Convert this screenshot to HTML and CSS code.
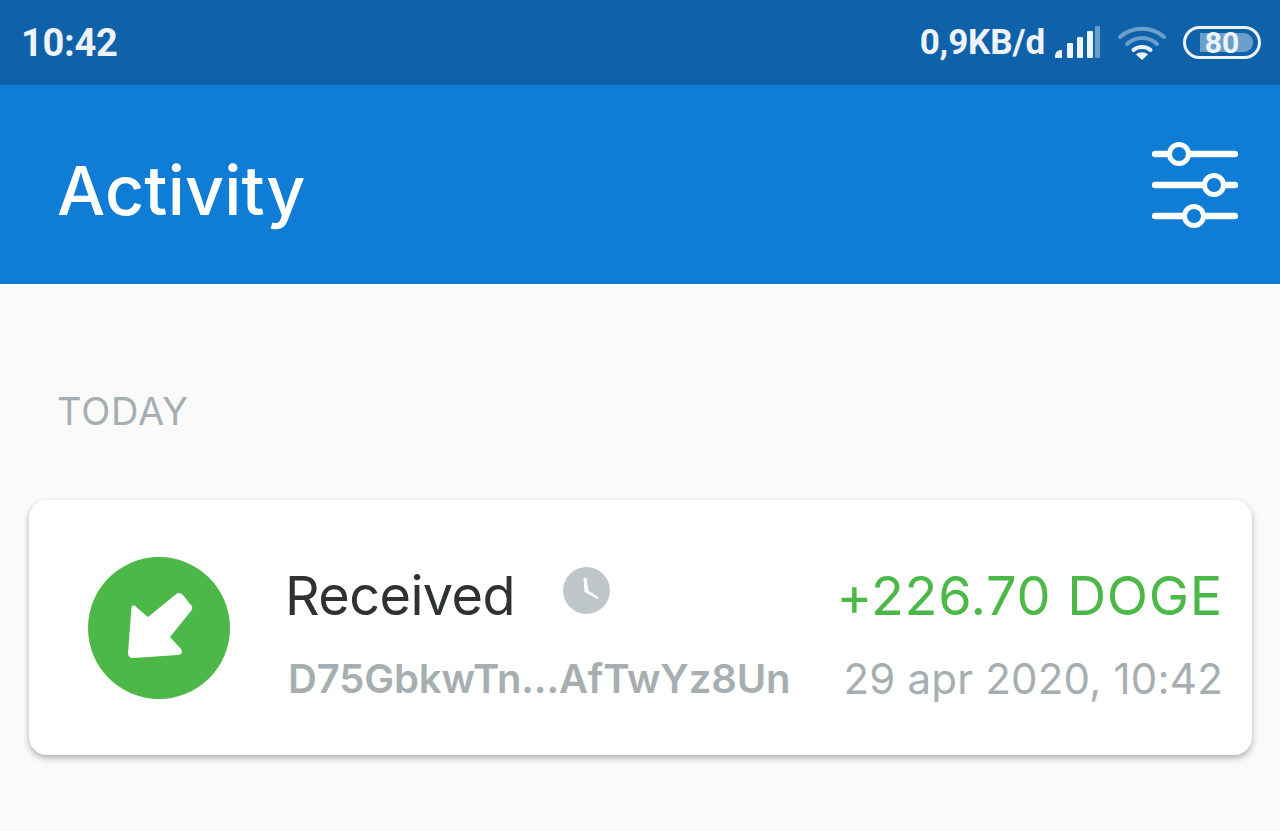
FILE: index.html
```html
<!DOCTYPE html>
<html lang="en">
<head>
  <meta charset="UTF-8">
  <title>Activity</title>
  <link rel="stylesheet" href="styles.css">
</head>
<body>

  <!-- Phone status bar -->
  <div class="status-bar">
    <span class="clock">10:42</span>
    <div class="status-right">
      <span class="net-speed">0,9KB/d</span>
      <svg class="signal" width="46" height="34" viewBox="0 0 46 34">
        <path d="M1 32v-2a6 6 0 0 1 6-6h1v8z" fill="#eef3f8"/>
        <rect x="13" y="17" width="6" height="15" rx="1" fill="#eef3f8"/>
        <rect x="23" y="11" width="6" height="21" rx="1" fill="#eef3f8"/>
        <rect x="33" y="5" width="6" height="27" rx="1" fill="#eef3f8"/>
        <rect x="41" y="0" width="5" height="32" rx="1" fill="#6a9fcc"/>
      </svg>
      <svg class="wifi" width="48" height="36" viewBox="0 0 48 36">
        <path d="M2 12C14 1 34 1 46 12" fill="none" stroke="#6a9fcc" stroke-width="4" stroke-linecap="round"/>
        <path d="M9 19C18 11 30 11 39 19" fill="none" stroke="#6a9fcc" stroke-width="4" stroke-linecap="round"/>
        <path d="M15.500 25C20 21 28 21 32.500 25" fill="none" stroke="#eef3f8" stroke-width="4" stroke-linecap="round"/>
        <path d="M24 35l-6-5.500c3-3 9-3 12 0z" fill="#eef3f8"/>
      </svg>
      <div class="battery">
        <div class="battery-fill"></div>
        <span class="battery-text">80</span>
      </div>
    </div>
  </div>

  <!-- App header -->
  <header class="app-bar">
    <h1 class="app-title">Activity</h1>
    <svg class="filter-icon" width="86" height="90" viewBox="0 0 86 90">
      <g stroke="#fff" stroke-width="6.500" stroke-linecap="round" fill="none">
        <path d="M3 14h80"/>
        <path d="M3 45h80"/>
        <path d="M3 76h80"/>
      </g>
      <g stroke="#fff" stroke-width="5" fill="#0f7cd6">
        <circle cx="27" cy="14" r="9.500"/>
        <circle cx="62" cy="45" r="9.500"/>
        <circle cx="42" cy="76" r="9.500"/>
      </g>
    </svg>
  </header>

  <main class="content">
    <div class="section-label">TODAY</div>

    <div class="tx-card">
      <div class="tx-icon">
        <svg width="142" height="142" viewBox="0 0 142 142">
          <circle cx="71" cy="71" r="71" fill="#4cb848"/>
          <path d="M47 49 Q44 47 43.500 51 L40 96 Q40 101 45 101 L90 98 Q96 97 93 92 L82 80 L103 54 Q106 50 102 47 L95 38 Q91 34 87 38 L60 60 Z" fill="#fff"/>
        </svg>
      </div>
      <div class="tx-info">
        <div class="tx-top">
          <span class="tx-type">Received</span>
          <svg class="clock-icon" width="47" height="47" viewBox="0 0 47 47">
            <circle cx="23.500" cy="23.500" r="23.500" fill="#bfc6c9"/>
            <path d="M20.500 11h3l2 13 10 6-1 2-13-7z" fill="#fff"/>
          </svg>
        </div>
        <div class="tx-address">D75GbkwTn...AfTwYz8Un</div>
      </div>
      <div class="tx-right">
        <div class="tx-amount">+226.70 DOGE</div>
        <div class="tx-date">29 apr 2020, 10:42</div>
      </div>
    </div>
  </main>

</body>
</html>
```

FILE: styles.css
```css
* {
  box-sizing: border-box;
}

html, body {
  margin: 0;
  height: 100%;
  overflow: hidden;
}

body {
  font-family: Inter, Roboto, "Liberation Sans", sans-serif;
  background-color: #fafafa;
}

.status-bar {
  height: 85px;
  background-color: #0f62a9;
  color: #eef3f8;
  font-family: Roboto, sans-serif;
  display: flex;
  align-items: center;
  justify-content: space-between;
  padding: 0 19px 0 21px;
}

.clock {
  font-size: 38px;
  font-weight: 700;
  letter-spacing: -0.3px;
}

.status-right {
  display: flex;
  align-items: center;
}

.net-speed {
  font-size: 35px;
  font-weight: 700;
  letter-spacing: -0.1px;
  margin-right: 9px;
}

.signal {
  margin-right: 18px;
}

.wifi {
  margin-right: 17px;
}

.battery {
  width: 78px;
  height: 33px;
  border: 3px solid #eef3f8;
  border-radius: 17px;
  display: flex;
  align-items: center;
  justify-content: center;
  position: relative;
  overflow: hidden;
}

.battery-fill {
  position: absolute;
  top: 4px;
  bottom: 4px;
  left: 14px;
  width: 53px;
  background-color: #6a9fcc;
  border-radius: 0 9px 9px 0;
}

.battery-text {
  position: relative;
  font-size: 30px;
  font-weight: 700;
}

.app-bar {
  height: 199px;
  background-color: #0f7cd6;
  display: flex;
  align-items: center;
  justify-content: space-between;
  padding: 0 42px 0 57px;
}

.app-title {
  margin: 10px 0 0;
  color: #fff;
  font-size: 68px;
  font-weight: 500;
  letter-spacing: 0.2px;
}

.content {
  padding: 104px 28px 0 29px;
}

.section-label {
  margin-left: 28px;
  color: #a5afb3;
  font-size: 38px;
  line-height: 46px;
  letter-spacing: 0.8px;
}

.tx-card {
  margin-top: 66px;
  height: 255px;
  background-color: #fff;
  border-radius: 18px;
  box-shadow: 0 3px 6px rgba(0,0,0,0.3);
  display: flex;
  align-items: center;
  padding: 0 29px 0 59px;
}

.tx-icon {
  display: flex;
  margin-right: 55px;
}

.tx-info {
  flex: 1;
  margin-top: 11px;
}

.tx-top {
  display: flex;
  align-items: flex-start;
}

.tx-type {
  font-size: 54px;
  line-height: 64px;
  letter-spacing: -0.6px;
  color: #2e3233;
}

.clock-icon {
  margin-left: 48px;
  margin-top: 3px;
}

.tx-address {
  margin-top: 28px;
  margin-left: 3px;
  color: #a7aeb1;
  font-size: 40px;
  font-weight: 600;
  line-height: 46px;
  letter-spacing: -0.15px;
}

.tx-right {
  text-align: right;
  margin-top: 11px;
}

.tx-amount {
  font-size: 54px;
  line-height: 64px;
  letter-spacing: 0.7px;
  color: #4cb848;
}

.tx-date {
  margin-top: 28px;
  color: #a7aeb1;
  font-size: 42px;
  line-height: 46px;
  letter-spacing: 0.2px;
}
```
